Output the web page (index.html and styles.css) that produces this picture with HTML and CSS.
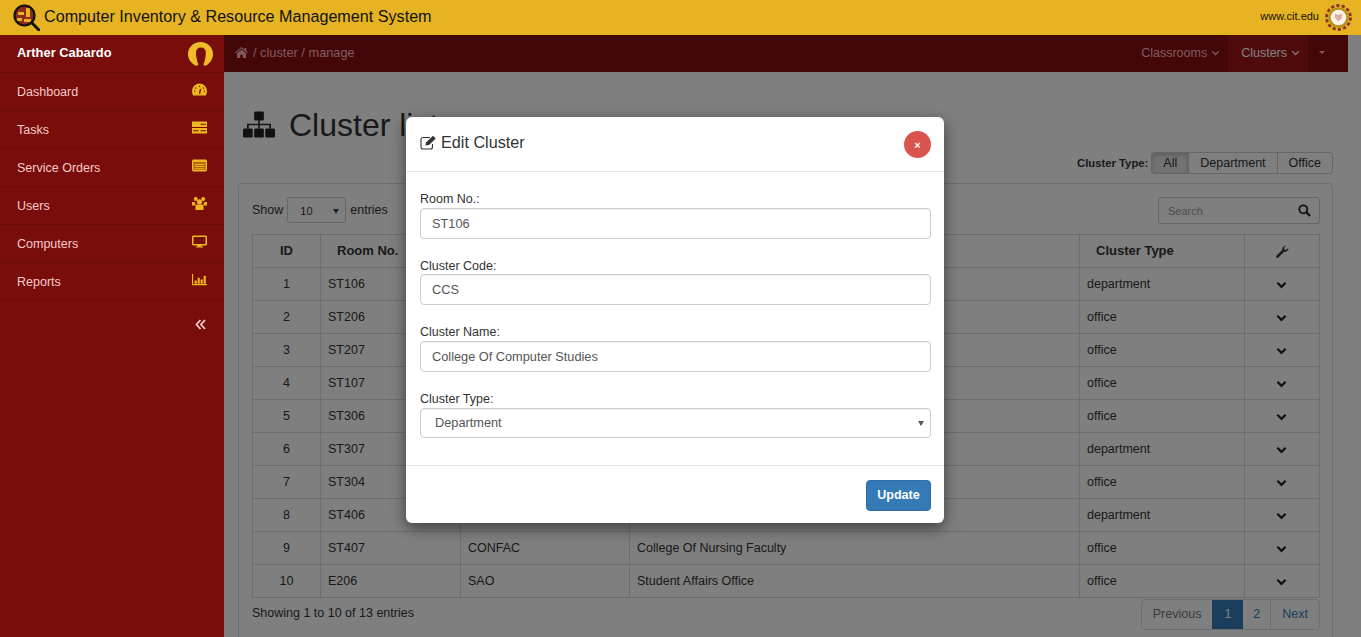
FILE: index.html
```html
<!DOCTYPE html>
<html lang="en">

<head>
    <meta charset="UTF-8">
    <title>Computer Inventory &amp; Resource Management System</title>
    <link rel="stylesheet" href="styles.css">
</head>

<body>
    <svg class="sprite" aria-hidden="true">
        <symbol id="i-chevron" viewBox="0 0 12 8">
            <path d="M1.500 1.500 6 6l4.500-4.500" fill="none" stroke="currentColor" stroke-width="2.400" />
        </symbol>
        <symbol id="i-caret" viewBox="0 0 12 8">
            <path d="M1.500 1.500 6 6l4.500-4.500" fill="none" stroke="currentColor" stroke-width="1.700" />
        </symbol>
    </svg>

    <header class="site-header">
        <svg class="logo" viewBox="0 0 27 27">
            <circle cx="11.500" cy="11.500" r="10" fill="#8e2a1c" />
            <path d="M5 8h6v3H5zM13 4h4v9h-4zM4 14h5v3H4zM11 15h7v3h-7z" fill="#e6b422" />
            <circle cx="11.500" cy="11.500" r="10" fill="none" stroke="#111" stroke-width="2.200" />
            <path d="M18.500 18.500 26 26" stroke="#111" stroke-width="3" stroke-linecap="round" />
        </svg>
        <div class="site-title">Computer Inventory &amp; Resource Management System</div>
        <div class="site-link">www.cit.edu</div>
        <svg class="seal" viewBox="0 0 27 27">
            <circle cx="13.500" cy="13.500" r="12" fill="none" stroke="#8a3526" stroke-width="2.800" stroke-dasharray="3.200 2.200" />
            <circle cx="13.500" cy="13.500" r="10.300" fill="#b8901c" />
            <circle cx="13.500" cy="13.500" r="7.800" fill="#fbf3e6" />
            <path d="M10 9.500l3.500 1.500 3.500-1.500v4.500l-3.500 3.500-3.500-3.500z" fill="#dcaea6" />
        </svg>
    </header>

    <div class="layout">
        <aside class="sidebar">
            <div class="side-user">
                <span>Arther Cabardo</span>
                <svg class="avatar" viewBox="0 0 25 24">
                    <path d="M12.500 0C19.400 0 25 5.400 25 12c0 5-3 9.500-7 11.500-1.500.6-2.600-.4-2.400-1.500.2-1 1-2 1.200-4 .6-2 1-4.500 1-7.500 0-3-1.600-5-4.800-5S8 7.500 8 10.500c0 3 .4 5.500 1 7.500.2 2 1 3 1.200 4 .2 1.100-.9 2.100-2.400 1.500C3 21.500 0 17 0 12 0 5.400 5.600 0 12.500 0z" />
                </svg>
            </div>
            <a class="side-item">Dashboard
                <svg class="side-icon" viewBox="0 0 14 11">
                    <path d="M7 0a7 7 0 0 1 7 7c0 1.500-.4 2.800-1 4H1C.4 9.800 0 8.500 0 7a7 7 0 0 1 7-7z" />
                    <path d="M2 7h1M2.800 4.300h1M6.500 2.500h1M10.200 4.300h1M11 7h1M7 9.500L8 5" stroke="#780d0b" stroke-width="1.200" />
                </svg>
            </a>
            <a class="side-item">Tasks
                <svg class="side-icon" viewBox="0 0 14 11">
                    <path d="M0 0h14v5H0zM0 6h14v5H0z" />
                    <path d="M8 2.500h5M1 8.500h5M8 8.500h5" stroke="#780d0b" stroke-width="1" />
                </svg>
            </a>
            <a class="side-item">Service Orders
                <svg class="side-icon" viewBox="0 0 14 11">
                    <path fill-rule="evenodd" d="M1 0h12l1 1v9l-1 1H1l-1-1V1zM1.500 2.500v7h11v-7z" />
                    <path opacity="0.500" d="M1.500 2.500h11v7h-11z" />
                    <path d="M2.500 4h9v1h-9zM2.500 6h9v1h-9zM2.500 8h9v1h-9z" />
                </svg>
            </a>
            <a class="side-item">Users
                <svg class="side-icon" viewBox="0 0 15 13">
                    <circle cx="3.800" cy="2" r="2" />
                    <circle cx="11.200" cy="2" r="2" />
                    <circle cx="7.500" cy="4.800" r="2.600" />
                    <path d="M0 5h2.500l1 2v1.500H0zM15 5h-2.500l-1 2v1.500H15zM3.500 9Q3.500 7.600 5 7.600h5Q11.500 7.600 11.500 9v4h-8z" />
                </svg>
            </a>
            <a class="side-item">Computers
                <svg class="side-icon" viewBox="0 0 15 12">
                    <path fill-rule="evenodd" d="M1 0h13l1 1v8l-1 1H9.500v1H11v1H4v-1h1.500v-1H1l-1-1V1zM1.500 1.500v7h12v-7z" />
                </svg>
            </a>
            <a class="side-item">Reports
                <svg class="side-icon" viewBox="0 0 16 12">
                    <path d="M0 0h1.200v10.800H16V12H0z" />
                    <path d="M2.800 7h2.300v3.500H2.800zM6 4h2.300v6.500H6zM9.200 6h2.300v4.500H9.200zM12.400 2h2.300v8.500h-2.300z" />
                </svg>
            </a>
            <div class="side-collapse">
                <svg viewBox="0 0 11 11" width="11" height="11">
                    <path d="M5.500 1 1.500 5.500l4 4.500M10 1 6 5.500l4 4.500" fill="none" stroke="currentColor" stroke-width="1.800" />
                </svg>
            </div>
        </aside>

        <div class="main">
            <nav class="topbar">
                <div class="crumbs">
                    <svg class="home" viewBox="0 0 13 11">
                        <path d="M6.500 0 9.500 2.600V1h1.800v3.100L13 5.600l-.7.700-5.800-5-5.800 5L0 5.600zM2 6.300l4.500-3.800L11 6.300V11H7.800V7.700H5.200V11H2z" />
                    </svg>
                    <span>/ cluster / manage</span>
                </div>
                <div class="top-links">
                    <a class="top-link">Classrooms <svg class="top-chev"><use href="#i-caret" /></svg></a>
                    <a class="top-link active">Clusters <svg class="top-chev"><use href="#i-caret" /></svg></a>
                    <a class="top-caret"></a>
                </div>
            </nav>

            <section class="content">
                <h1 class="page-title">
                    <svg class="title-icon" viewBox="0 0 33 27">
                        <rect x="11.500" y="0" width="10" height="9.500" rx="1.500" />
                        <rect x="0" y="17.500" width="10" height="9.500" rx="1.500" />
                        <rect x="11.500" y="17.500" width="10" height="9.500" rx="1.500" />
                        <rect x="23" y="17.500" width="10" height="9.500" rx="1.500" />
                        <path d="M16.500 9v9M5 18v-4.500h23V18" fill="none" stroke="#333" stroke-width="1.800" />
                    </svg>
                    Cluster list
                </h1>

                <div class="type-filter">
                    <b class="type-label">Cluster Type:</b>
                    <div class="btn-group">
                        <a class="btn active">All</a>
                        <a class="btn">Department</a>
                        <a class="btn">Office</a>
                    </div>
                </div>

                <div class="panel">
                    <div class="table-tools">
                        <div class="length">
                            Show
                            <div class="mini-select">10</div>
                            entries
                        </div>
                        <div class="search">
                            <span>Search</span>
                            <svg viewBox="0 0 13 13" width="13" height="13">
                                <circle cx="5.300" cy="5.300" r="4" fill="none" stroke="#222" stroke-width="1.800" />
                                <path d="M8.300 8.300 12 12" stroke="#222" stroke-width="2.200" />
                            </svg>
                        </div>
                    </div>

                    <table class="grid grid-head">
                        <colgroup>
                            <col class="c-id"><col class="c-room"><col class="c-code"><col class="c-name"><col class="c-type"><col class="c-act">
                        </colgroup>
                        <tr>
                            <th class="center">ID</th>
                            <th>Room No.</th>
                            <th>Cluster Code</th>
                            <th>Cluster Name</th>
                            <th>Cluster Type</th>
                            <th class="center">
                                <svg class="wrench" viewBox="0 0 13 13">
                                    <path d="M1.500 11.500 7 6" stroke="#333" stroke-width="2.600" stroke-linecap="round" />
                                    <path d="M12.300 2.700a3.600 3.600 0 0 1-5.200 3.700l-.6-.6A3.600 3.600 0 0 1 10 .7L8 2.800l.4 1.800 1.800.4z" />
                                </svg>
                            </th>
                        </tr>
                    </table>

                    <table class="grid grid-body">
                        <colgroup>
                            <col class="c-id"><col class="c-room"><col class="c-code"><col class="c-name"><col class="c-type"><col class="c-act">
                        </colgroup>
                        <tr><td class="center">1</td><td>ST106</td><td>CCS</td><td>College Of Computer Studies</td><td>department</td><td class="center"><svg class="chev"><use href="#i-chevron" /></svg></td></tr>
                        <tr><td class="center">2</td><td>ST206</td><td></td><td></td><td>office</td><td class="center"><svg class="chev"><use href="#i-chevron" /></svg></td></tr>
                        <tr><td class="center">3</td><td>ST207</td><td></td><td></td><td>office</td><td class="center"><svg class="chev"><use href="#i-chevron" /></svg></td></tr>
                        <tr><td class="center">4</td><td>ST107</td><td></td><td></td><td>office</td><td class="center"><svg class="chev"><use href="#i-chevron" /></svg></td></tr>
                        <tr><td class="center">5</td><td>ST306</td><td></td><td></td><td>office</td><td class="center"><svg class="chev"><use href="#i-chevron" /></svg></td></tr>
                        <tr><td class="center">6</td><td>ST307</td><td></td><td></td><td>department</td><td class="center"><svg class="chev"><use href="#i-chevron" /></svg></td></tr>
                        <tr><td class="center">7</td><td>ST304</td><td></td><td></td><td>office</td><td class="center"><svg class="chev"><use href="#i-chevron" /></svg></td></tr>
                        <tr><td class="center">8</td><td>ST406</td><td></td><td></td><td>department</td><td class="center"><svg class="chev"><use href="#i-chevron" /></svg></td></tr>
                        <tr><td class="center">9</td><td>ST407</td><td>CONFAC</td><td>College Of Nursing Faculty</td><td>office</td><td class="center"><svg class="chev"><use href="#i-chevron" /></svg></td></tr>
                        <tr><td class="center">10</td><td>E206</td><td>SAO</td><td>Student Affairs Office</td><td>office</td><td class="center"><svg class="chev"><use href="#i-chevron" /></svg></td></tr>
                    </table>

                    <div class="table-foot">
                        <div class="info">Showing 1 to 10 of 13 entries</div>
                        <div class="pager">
                            <a class="page disabled">Previous</a>
                            <a class="page current">1</a>
                            <a class="page page-two">2</a>
                            <a class="page">Next</a>
                        </div>
                    </div>
                </div>
            </section>
        </div>
    </div>

    <div class="backdrop"></div>

    <div class="modal">
        <div class="modal-head">
            <svg class="edit-icon" viewBox="0 0 17 15">
                <path d="M12.500 9v3a2 2 0 0 1-2 2H3a2 2 0 0 1-2-2V4.500a2 2 0 0 1 2-2h7" fill="none" stroke="#333" stroke-width="1.100" />
                <path d="M5.500 10.500 6 7.500 13 .8 15.800 3.500 9 10z" fill="#333" />
            </svg>
            <h4>Edit Cluster</h4>
            <button class="close" type="button">×</button>
        </div>
        <form class="modal-body">
            <div class="form-group">
                <label for="room">Room No.:</label>
                <input id="room" type="text" value="ST106">
            </div>
            <div class="form-group">
                <label for="code">Cluster Code:</label>
                <input id="code" type="text" value="CCS">
            </div>
            <div class="form-group">
                <label for="name">Cluster Name:</label>
                <input id="name" type="text" value="College Of Computer Studies">
            </div>
            <div class="form-group">
                <label for="type">Cluster Type:</label>
                <div class="select-wrap">
                    <select id="type">
                        <option>Department</option>
                        <option>Office</option>
                    </select>
                </div>
            </div>
        </form>
        <div class="modal-foot">
            <button class="btn-update" type="button">Update</button>
        </div>
    </div>
</body>

</html>
```

FILE: styles.css
```css
:root {
    --gold: #e6b422;
    --maroon: #780d0b;
    --maroon-line: #680b09;
    --border-color: #ddd;
    --text-color: #333;
    --link-color: #337ab7;
    --font-family: "Liberation Sans", Arial, sans-serif;
}

* {
    box-sizing: border-box;
}

html,
body {
    height: 100%;
    margin: 0;
    overflow: hidden;
}

body {
    font-family: var(--font-family);
    font-size: 12.5px;
    color: var(--text-color);
    background-color: #fff;
    display: flex;
    flex-direction: column;
}

.sprite {
    display: none;
}

/* header */
.site-header {
    height: 35px;
    flex: none;
    background-color: var(--gold);
    display: flex;
    align-items: center;
    padding: 0 9px 0 13px;
    color: #111;
}

.logo {
    width: 27px;
    height: 27px;
    margin-right: 4px;
}

.site-title {
    font-size: 16.150px;
    flex: 1;
    margin-bottom: 2px;
}

.site-link {
    font-size: 11px;
    margin: 0 6px 4px 0;
}

.seal {
    width: 27px;
    height: 27px;
}

.layout {
    flex: 1;
    display: flex;
    min-height: 0;
}

/* sidebar */
.sidebar {
    width: 224px;
    flex: none;
    background-color: var(--maroon);
    color: #fbcaca;
}

.side-user,
.side-item {
    height: 38px;
    display: flex;
    align-items: center;
    justify-content: space-between;
    padding: 0 17px;
    border-bottom: 1px solid var(--maroon-line);
}

.side-user {
    color: #fff;
    font-weight: bold;
    font-size: 12.900px;
    padding-bottom: 3px;
}

.avatar {
    width: 25px;
    height: 24px;
    margin: 3px -6px 0 0;
    fill: #efbb26;
}

.side-icon {
    width: 15px;
    height: 13px;
    fill: #efb71f;
    margin-top: -4px;
}

.side-collapse {
    height: 46px;
    display: flex;
    align-items: center;
    justify-content: flex-end;
    padding-right: 18px;
}

/* main column */
.main {
    width: 1124px;
    flex: none;
}

.topbar {
    height: 37px;
    background-color: #860e10;
    color: #ffb6bd;
    display: flex;
    align-items: center;
    justify-content: space-between;
    padding-left: 11px;
}

.crumbs {
    display: flex;
    align-items: center;
    gap: 5px;
    font-size: 12.800px;
    margin-bottom: 2px;
}

.home {
    width: 13px;
    height: 11px;
    fill: currentColor;
}

.top-links {
    display: flex;
    height: 100%;
}

.top-link {
    display: flex;
    align-items: center;
    gap: 4px;
    padding: 0 8px 2px 13px;
    height: 100%;
}

.top-link.active {
    background-color: #9e1416;
    color: #fff;
}

.top-chev {
    width: 9px;
    height: 6px;
}

.top-caret {
    width: 40px;
    position: relative;
}

.top-caret::after {
    content: "";
    position: absolute;
    left: 11px;
    top: 16px;
    border: 3px solid transparent;
    border-top-color: currentColor;
}

.content {
    padding: 27px 15px 0 14px;
}

.page-title {
    height: 52px;
    margin: 0;
    display: flex;
    align-items: center;
    gap: 14px;
    font-size: 32px;
    font-weight: normal;
}

.title-icon {
    width: 32px;
    height: 27px;
    margin: -1px 0 0 5px;
    fill: #222;
}

.type-filter {
    display: flex;
    justify-content: flex-end;
    align-items: center;
    gap: 3px;
    margin-top: 1px;
    margin-bottom: 9px;
}

.type-label {
    font-size: 11.300px;
}

.btn-group {
    display: flex;
    height: 22px;
    border: 1px solid #ccc;
    border-radius: 3px;
}

.btn {
    padding: 0 11px;
    line-height: 20px;
    border-left: 1px solid #ccc;
}

.btn:first-child {
    border-left: 0;
    border-radius: 2px 0 0 2px;
}

.btn.active {
    background-color: #e6e6e6;
    box-shadow: inset 0 2px 4px rgba(0, 0, 0, 0.2);
}

/* table panel */
.panel {
    border: 1px solid var(--border-color);
    border-radius: 4px;
    padding: 13px 12px 30px 13px;
}

.table-tools {
    display: flex;
    justify-content: space-between;
    align-items: flex-start;
    height: 37px;
}

.length {
    display: flex;
    align-items: center;
    gap: 4px;
    height: 26px;
}

.mini-select {
    width: 59px;
    height: 26px;
    border: 1px solid #ccc;
    border-radius: 3px;
    font-size: 11px;
    line-height: 27px;
    padding-left: 12px;
    position: relative;
}

.mini-select::after {
    content: "";
    position: absolute;
    right: 6px;
    top: 11px;
    border: 3.500px solid transparent;
    border-top: 5px solid #444;
    border-bottom: 0;
}

.search {
    width: 162px;
    height: 27px;
    border: 1px solid #ccc;
    border-radius: 3px;
    font-size: 11px;
    color: #999;
    display: flex;
    align-items: center;
    justify-content: space-between;
    padding: 0 8px 0 9px;
}

.grid {
    border-collapse: collapse;
    table-layout: fixed;
}

.grid th,
.grid td {
    border: 1px solid var(--border-color);
    padding: 0 7px;
    text-align: left;
}

.grid-head {
    width: 1067px;
}

.grid-head th {
    height: 33px;
    padding: 0 7px 2px 16px;
    font-size: 13px;
}

.grid-body {
    width: 1066px;
    margin-top: -1px;
}

.grid-body td {
    height: 33px;
}

.grid .center {
    text-align: center;
    padding: 0;
}

.grid-head .center {
    padding: 0 0 2px;
}

.c-id {
    width: 68px;
}

.c-room {
    width: 140px;
}

.c-code {
    width: 169px;
}

.c-name {
    width: 450px;
}

.c-type {
    width: 165px;
}

.c-act {
    width: 75px;
}

.chev {
    width: 11px;
    height: 8px;
    color: #222;
    margin: 5px 2px 0 0;
}

.wrench {
    width: 13px;
    height: 13px;
    fill: #333;
    vertical-align: middle;
}

.table-foot {
    display: flex;
    justify-content: space-between;
    align-items: flex-start;
    margin-top: 1px;
}

.info {
    margin-top: 7px;
}

.pager {
    display: flex;
    height: 31px;
    border: 1px solid var(--border-color);
    border-radius: 4px;
    color: var(--link-color);
}

.page {
    padding: 0 11px;
    line-height: 29px;
    border-left: 1px solid var(--border-color);
}

.page:first-child {
    border-left: 0;
}

.page.disabled {
    color: #777;
}

.page.current {
    background-color: var(--link-color);
    color: #fff;
    border-left: 0;
    padding: 0 12px;
}

.page.page-two {
    padding: 0 10px;
    border-left: 0;
}

/* modal */
.backdrop {
    position: absolute;
    left: 224px;
    right: 0;
    top: 35px;
    bottom: 0;
    background-color: rgba(0, 0, 0, 0.5);
}

.modal {
    position: absolute;
    left: 406px;
    top: 117px;
    width: 538px;
    background-color: #fff;
    border-radius: 6px;
    box-shadow: 0 5px 15px rgba(0, 0, 0, 0.5);
}

.modal-head {
    height: 55px;
    display: flex;
    align-items: center;
    padding: 0 13px 4px 14px;
    border-bottom: 1px solid #e5e5e5;
}

.edit-icon {
    width: 17px;
    height: 15px;
    margin-right: 4px;
}

.modal-head h4 {
    flex: 1;
    margin: 0;
    font-size: 16.200px;
    font-weight: normal;
}

.close {
    width: 27px;
    height: 27px;
    margin-top: 5px;
    border: 0;
    border-radius: 50%;
    background-color: #d9534f;
    color: #fff;
    font-size: 11px;
    font-weight: bold;
    font-family: var(--font-family);
    padding: 0;
}

.modal-body {
    padding: 15px 13px 12px 14px;
    border-bottom: 1px solid #e5e5e5;
}

.form-group {
    margin-bottom: 15px;
}

.form-group label {
    display: block;
    padding-top: 4px;
    line-height: 16.670px;
}

.form-group input,
.form-group select {
    display: block;
    width: 100%;
    height: 31px;
    border: 1px solid #ccc;
    border-radius: 4px;
    font-family: var(--font-family);
    font-size: 12.750px;
    color: #555;
    background-color: #fff;
    padding: 0 11px;
    box-shadow: inset 0 1px 1px rgba(0, 0, 0, 0.075);
}

.form-group select {
    appearance: none;
    height: 30px;
    padding-left: 14px;
}

.select-wrap {
    position: relative;
}

.select-wrap::after {
    content: "";
    position: absolute;
    right: 7px;
    top: 13px;
    border: 3px solid transparent;
    border-top: 5px solid #555;
    border-bottom: 0;
}

.modal-foot {
    display: flex;
    justify-content: flex-end;
    padding: 14px 13px 12px;
}

.btn-update {
    width: 65px;
    height: 31px;
    border: 1px solid #2e6da4;
    border-radius: 4px;
    background-color: var(--link-color);
    color: #fff;
    font-family: var(--font-family);
    font-size: 12.5px;
    font-weight: bold;
    padding: 0;
}
```
